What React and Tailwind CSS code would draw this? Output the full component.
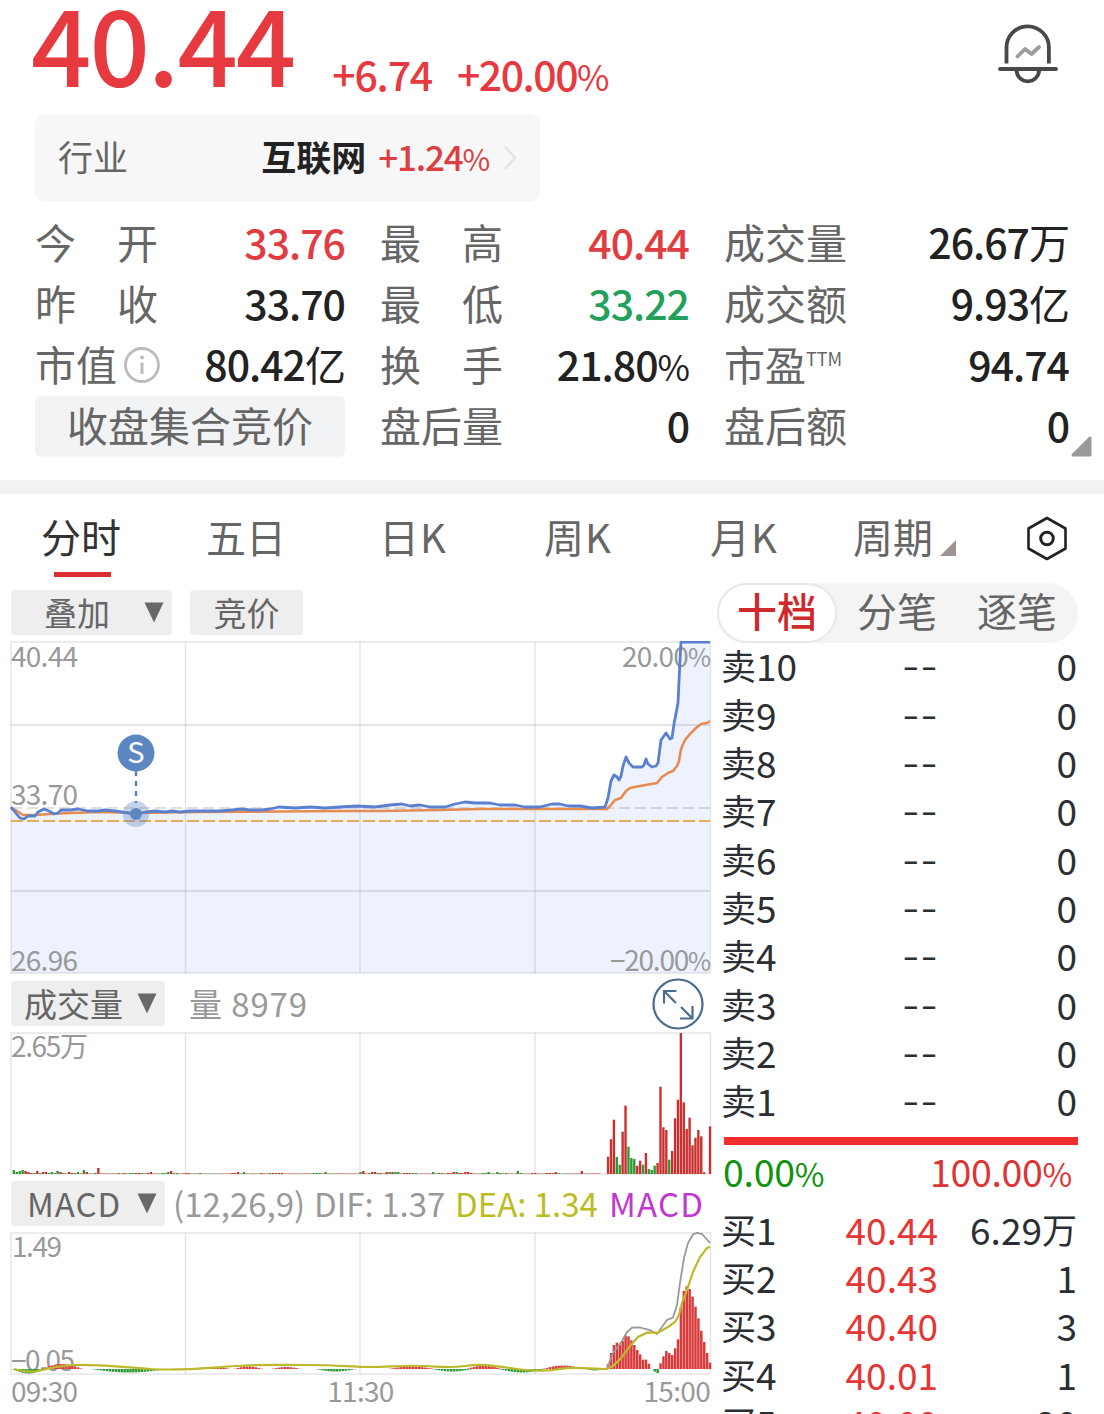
import React, { useState } from "react";
import clsx from "clsx";

const RED = "#c9302f";
const GREEN = "#2f9a35";
const STEP = 2.9125;

const stats = [
  { label: "今开", value: "33.76", color: "text-[#e03c41]" },
  { label: "最高", value: "40.44", color: "text-[#e03c41]" },
  { label: "成交量", value: "26.67", unit: "万" },
  { label: "昨收", value: "33.70" },
  { label: "最低", value: "33.22", color: "text-[#23a15c]" },
  { label: "成交额", value: "9.93", unit: "亿" },
  { label: "市值", value: "80.42", unit: "亿", info: true },
  { label: "换手", value: "21.80", pct: true },
  { label: "市盈", value: "94.74", sup: "TTM" },
  { button: "收盘集合竞价" },
  { label: "盘后量", value: "0" },
  { label: "盘后额", value: "0" },
];

const sells = [10, 9, 8, 7, 6, 5, 4, 3, 2, 1];
const buys = [
  { level: 1, price: "40.44", amount: "6.29", unit: "万" },
  { level: 2, price: "40.43", amount: "1" },
  { level: 3, price: "40.40", amount: "3" },
  { level: 4, price: "40.01", amount: "1" },
  { level: 5, price: "40.00", amount: "20" },
];

// one entry per minute, negative = falling minute
const quietVolume = [
  0, -4, -2, -3, -4, 3, 2, 1, -1, 3, -1, 2, 2, -1, -2, -1, -3, 2, -1, 0.5, 2, 1, -1, -2, 0.5, -4, 2, 0.5, -0.5, -1, 6, 0.5, 0.5, 0.5, 0.5, 0.5,
  0.5, -1, 0.5, 1, -0.5, -1, -1, 1, 1, -1, 0.5, 1, 2, 0.5, 0.5, -0.5, -1, -1, -2, 3, -1, -1, 0.5, 0.5, 1, 1, -0.5, 0.5, 0.5, -1, -0.5, 0.5, -0.5, -0.5, -0.5, -0.5,
  0.5, 0.5, 0.5, 0.5, 1, 1, 2, -0.5, -2, 0.5, -0.5, 0.5, 0.5, -0.5, 1, 0.5, 0.5, -1, 1, -1, 1, 1, 0.5, 0.5, 0.5, 0.5, 0.5, -0.5, 0.5, 0.5, 0.5, 0.5, -1, -1,
  -1, 0.5, -2, 0.5, -0.5, 0.5, 0.5, 0.5, 0.5, 0.5, 0.5, 0.5, 0.5, 0.5, -2, 3, 0.5, -1, 2, 2, -1, 1, 0.5, 2, -2, 2, -2, -2, 0.5, 1, 1, 1, -1, -1, -0.5, 0.5,
  0.5, 0.5, 0.5, -2, -0.5, 1, -1, 0.5, 1, 1, 2, -2, 1, 1, 2, 2, 1, 0.5, -0.5, 0.5, -1, -1, -2, 0.5, -0.5, -2, -1, 0.5, -1, 0.5, 0.5, -0.5, -3, -1, 0.5, -0.5,
  0.5, 1, 1, 0.5, -0.5, 0.5, 1, 1, 1, 2, -1, -0.5, -0.5, 0.5, 0.5, 0.5, 0.5, 0.5, 3, -0.5, 0.5, 0.5, 0.5, 0.5, 0.5,
];
const lateVolume = [
  17.3, 34.7, 54.3, -17, -9.3, 42.3, 68.3, -27.3, -16, -15, 8.3, 13.3, -9.3, 21, -5, -4, -8.3, 11, 87.3, 46.7, 44, -14.3,
  23, 55.7, 74.3, 141, 71.7, 45, 56.3, 28.7, 36.3, 44, 37.7, 1.7, 0, 47.7,
];
const lateMacd = [
  15, 48, 72, 79, 73, 84, 101, 98, 86, 72, 57, 44, 28, 28, 16, 0, -8, -12, 17, 38, 54, 48, 42, 62, 89, 186, 234, 248, 240,
  217, 187, 152, 115, 81, 48, 19,
];

// start minute, length and height of the small early histogram swells
const swells = [
  [1, 11, -4.5], [11, 14, 5], [28, 26, -3.5], [63, 13, 2], [77, 10, 2.5], [90, 10, 2], [105, 14, -2.5],
  [130, 16, 2.5], [145, 14, -2.5], [157, 12, 3.5], [168, 16, -3.5], [183, 14, 3.5], [198, 6, -1.5],
];

const priceLine =
  "11,807 15,812 20,818 24,819 28,816 35,816 38,812 44,809 49,811 54,814 58,813 61,810 70,810 78,809 88,811 98,811 105,810 115,811 122,812 128,813 136,814 146,812 155,811 165,812 172,811 180,812 190,811 205,811 220,811 232,810 242,809 250,810 262,810 270,809 279,807 295,808 310,807 325,808 340,807 357,806 375,807 390,805 402,804 410,806 420,805 430,807 445,807 455,804 465,802 475,803 490,803 500,805 515,805 525,807 540,807 552,804 560,804 568,806 580,806 592,808 605,807 608,798 611,781 614,775 617,777 619,780 621,776 623,766 626,757 629,763 633,767 642,767 644,765 646,759 648,764 652,767 656,766 658,763 661,740 666,733 670,739 672,738 674,724 678,703 680,660 681,642 710,642";

const avgLine =
  "11,808 17,811 23,815 35,815 50,814 70,813 100,812 136,813 200,812 280,811.5 340,811 380,811 440,810 480,809 540,809 607,809 610,806 615,800 621,798 626,791 630,788 640,786 657,783 662,777 668,773 673,771 677,766 679,761 681,749 685,740 690,734 696,728 701,724 707,723 710,721";

function DownArrow() {
  return (
    <svg width="20" height="21" viewBox="0 0 20 21">
      <path d="M0.5 0.5H19.5L10 20.5Z" fill="#686868" />
    </svg>
  );
}

function Percent() {
  return <span className="text-[0.86em] font-normal">%</span>;
}

function BellIcon() {
  return (
    <svg width="60" height="60" viewBox="0 0 60 60" fill="none" stroke="#484848" strokeWidth="3.8">
      <path d="M8.5 39.5V23.5a21.2 21.2 0 0 1 42.4 0v16" />
      <path d="M2 45h56" strokeLinecap="round" />
      <path d="M18.5 46a11.3 11.3 0 0 0 22.6 0" />
      <path d="M19.5 32.500l7.500-7.500 6.500 5 7.500-7" stroke="#9b9b9b" strokeLinecap="round" strokeLinejoin="round" />
    </svg>
  );
}

function Header() {
  return (
    <header className="flex h-[114px] items-start justify-between pr-[46px] pl-[31px] text-[#e73a40]">
      <div className="flex items-baseline font-medium">
        <span className="text-[106px] leading-[82px] tracking-[-2px]">40.44</span>
        <span className="relative top-[4px] ml-[38px] text-[41px] leading-[60px] tracking-[-1.2px]">+6.74</span>
        <span className="relative top-[4px] ml-[25px] text-[41px] leading-[60px] tracking-[-1.5px]">
          +20.00
          <Percent />
        </span>
      </div>
      <div className="mt-[24px]">
        <BellIcon />
      </div>
    </header>
  );
}

function Industry() {
  return (
    <div className="ml-[35px] flex h-[88px] w-[505px] items-center rounded-[10px] bg-[#f7f7f7] pb-[4px] pl-[23px] text-[35px]">
      <span className="text-[#666]">行业</span>
      <span className="ml-auto font-bold text-[#222]">互联网</span>
      <span className="ml-[12px] text-[35px] font-medium tracking-[-1.2px] text-[#db3f43]">
        +1.24
        <Percent />
      </span>
      <svg className="mt-[4px] mr-[23px] ml-[14px]" width="14" height="24" viewBox="0 0 14 24" fill="none" stroke="#e3e3e3" strokeWidth="2.500">
        <path d="M2 1l10 11L2 23" />
      </svg>
    </div>
  );
}

function Stats() {
  return (
    <div className="relative mt-[9px] grid grid-cols-[310px_309px_345px] gap-x-[35px] pl-[35px] text-[41px] leading-[61px]">
      {stats.map((item, i) =>
        item.button ? (
          <button key={i} className="mt-[2px] h-[61px] rounded-md bg-[#f2f3f5] pb-[5px] leading-[50px] text-[#666]">
            {item.button}
          </button>
        ) : (
          <div key={i} className="flex h-[61px] justify-between">
            <div className="flex text-[#666]">
              <div className={clsx("flex", item.label.length === 2 && !item.info && !item.sup && "w-[123px] justify-between")}>
                {item.info || item.sup ? item.label : [...item.label].map((c) => <span key={c}>{c}</span>)}
              </div>
              {item.info && (
                <svg className="mt-[13px] ml-[6px]" width="38" height="38" viewBox="0 0 38 38" fill="none" stroke="#bcbcbc">
                  <circle cx="19" cy="19" r="16.500" strokeWidth="2.800" />
                  <path d="M19 16.500v11.500" strokeWidth="3" />
                  <circle cx="19" cy="11.500" r="2" fill="#bcbcbc" stroke="none" />
                </svg>
              )}
              {item.sup && <span className="-mt-[5px] text-[18px]">{item.sup}</span>}
            </div>
            <span className={clsx("font-medium tracking-[-1px]", item.color || "text-[#222]")}>
              {item.value}
              {item.pct && <Percent />}
              {item.unit && <span className="font-normal">{item.unit}</span>}
            </span>
          </div>
        )
      )}
      <svg className="absolute top-[225px] left-[1071px]" width="21" height="21" viewBox="0 0 21 21">
        <path d="M2 19L19 2V19Z" fill="#999" stroke="#999" strokeWidth="3" strokeLinejoin="round" />
      </svg>
    </div>
  );
}

function Tabs() {
  return (
    <nav className="flex h-[89px] pl-[41px] text-[40px] leading-[85px] text-[#666]">
      <div className="flex w-[165px] flex-col text-[#333]">
        <span className="h-[78px]">分时</span>
        <span className="ml-[13px] h-[5px] w-[57px] bg-[#dc2e30]" />
      </div>
      <span className="w-[173px]">五日</span>
      <span className="w-[165px] tracking-[1px]">日K</span>
      <span className="w-[166px] tracking-[1px]">周K</span>
      <span className="w-[143px] tracking-[1px]">月K</span>
      <span>周期</span>
      <svg className="mt-[46px] ml-[7px]" width="17" height="17" viewBox="0 0 17 17">
        <path d="M0 16L16 0V16Z" fill="#a09494" />
      </svg>
      <svg className="mt-[22px] ml-[69px]" width="42" height="45" viewBox="0 0 42 45" fill="none" stroke="#222">
        <path d="M21 2L39.500 12.500V32.500L21 43L2.500 32.500V12.500Z" strokeWidth="2.600" strokeLinejoin="round" />
        <circle cx="21" cy="22.500" r="6.300" strokeWidth="3" />
      </svg>
    </nav>
  );
}

function Grid({ top, bottom }) {
  return (
    <g stroke="#000" strokeOpacity="0.1" strokeWidth="1.500" fill="none">
      <rect x="11" y={top} width="699.500" height={bottom - top} />
      <path d={`M185.500 ${top}V${bottom}M360 ${top}V${bottom}M535 ${top}V${bottom}`} />
    </g>
  );
}

function PriceChart() {
  return (
    <svg width="704" height="334" viewBox="10 641 704 334" fontSize="28" fill="#999">
      <polygon points={`11,973 ${priceLine} 710,973`} fill="#edf2fe" />
      <Grid top={642} bottom={973} />
      <path d="M11 725H710M11 891H710" stroke="#000" strokeOpacity="0.1" strokeWidth="1.800" />
      <path d="M11 808H710" stroke="#000" strokeOpacity="0.12" strokeWidth="1.800" strokeDasharray="11 5" />
      <text x="11" y="667" textLength="67">40.44</text>
      <text x="11" y="805" textLength="67">33.70</text>
      <text x="11" y="971" textLength="67">26.96</text>
      <text x="622" y="667" textLength="89">20.00<tspan fontSize="25">%</tspan></text>
      <text x="610" y="971" textLength="101">−20.00<tspan fontSize="25">%</tspan></text>
      <path d="M11 821H710" stroke="#e3ad5b" strokeWidth="2" strokeDasharray="12 4" />
      <polyline points={avgLine} fill="none" stroke="#e68c50" strokeWidth="2.600" strokeLinejoin="round" />
      <polyline points={priceLine} fill="none" stroke="#5b80d0" strokeWidth="2.800" strokeLinejoin="round" />
      <path d="M136 771V803" stroke="#5c80ae" strokeWidth="2.400" strokeDasharray="5 5" />
      <circle cx="136" cy="814" r="13" fill="#5d87c0" fillOpacity="0.35" />
      <circle cx="136" cy="814" r="6" fill="#5d87c0" />
      <circle cx="136" cy="753" r="18.500" fill="#5d87c0" />
      <text x="136" y="763" textAnchor="middle" fontSize="29" fill="#fff">S</text>
    </svg>
  );
}

function VolumeChart() {
  const volume = [...quietVolume.slice(0, 205).map((v, i) => [i, v]), ...lateVolume.map((v, i) => [205 + i, v])];
  return (
    <svg width="704" height="143" viewBox="10 1032 704 143" fontSize="28" fill="#999">
      <Grid top={1033} bottom={1174} />
      <text x="11" y="1057" textLength="77">2.65万</text>
      {volume.map(([i, v]) => (
        <rect
          key={i}
          x={11 + i * STEP - 1.2}
          y={1174 - Math.abs(v)}
          width="2.400"
          height={Math.abs(v)}
          fill={v < 0 ? GREEN : RED}
        />
      ))}
    </svg>
  );
}

function MacdChart() {
  const bars = [];
  swells.forEach(([start, len, h]) => {
    for (let k = 0; k < len; k++) {
      bars.push({ i: start + k, h: h * Math.sin(((k + 0.5) / len) * Math.PI) });
    }
  });
  lateMacd.forEach((h, k) => bars.push({ i: 205 + k, h: h / 3 }));
  return (
    <svg width="704" height="143" viewBox="10 1232 704 143" fontSize="28" fill="#999">
      <Grid top={1233} bottom={1374} />
      <text x="12" y="1257" textLength="50">1.49</text>
      <text x="11" y="1371" textLength="64">−0.05</text>
      {bars.map((b, k) => (
        <rect
          key={k}
          x={11 + b.i * STEP - 1.2}
          y={b.h > 0 ? 1369 - b.h : 1369}
          width="2.500"
          height={Math.abs(b.h)}
          fill={b.h < 0 ? GREEN : "#d93a39"}
        />
      ))}
      <path
        d="M607 1368L613 1353L622 1341L627 1332L632 1327.700L640 1327.500L645 1329L650 1330L657 1334L662 1327L667 1320L673 1317.500L677 1305L680 1283L684 1258L688 1243L693 1234.500L697 1232.800L702 1234L710 1243"
        fill="none"
        stroke="#999"
        strokeWidth="1.800"
      />
      <path
        d="M14 1369C22 1371 30 1373 38 1371S55 1366 75 1365S120 1367 150 1369S205 1368 235 1366S280 1365 310 1365S350 1367 370 1367S405 1365 425 1366S450 1368 465 1366S490 1365 510 1368S545 1372 560 1369S590 1369 607 1369L613 1366L622 1357L630 1346L638 1337L647 1332.700L658 1332.700L668 1327L675 1322L679 1315L682 1303L687 1290L693 1272L700 1257L707 1248L710 1247"
        fill="none"
        stroke="#bcb92c"
        strokeWidth="2.200"
      />
    </svg>
  );
}

function ChartPanel() {
  const chip = "flex h-[45px] items-center rounded bg-[#eee] text-[33px] leading-[40px] text-[#666]";
  return (
    <section className="flex w-[704px] flex-col">
      <div className="mt-[7px] ml-px flex">
        <button className={clsx(chip, "w-[161px] justify-between pr-[8px] pl-[33px]")}>
          <span className="-mt-[2px]">叠加</span>
          <DownArrow />
        </button>
        <button className={clsx(chip, "ml-[18px] w-[113px] justify-center")}>
          <span className="-mt-[2px]">竞价</span>
        </button>
      </div>
      <div className="mt-[6px]">
        <PriceChart />
      </div>
      <div className="mt-[6px] ml-px flex h-[45px] items-center">
        <button className={clsx(chip, "w-[154px] justify-between pr-[8px] pl-[13px]")}>
          <span className="-mt-[2px]">成交量</span>
          <DownArrow />
        </button>
        <span className="-mt-[2px] ml-[24px] text-[33px] leading-[40px] tracking-[0.9px] text-[#999]">量 8979</span>
        <svg className="mr-[10px] ml-auto" width="52" height="52" viewBox="0 0 52 52" fill="none" stroke="#496c90" strokeWidth="2.200">
          <circle cx="26" cy="26" r="24.500" />
          <path d="M24 25L12.500 13.500M12 25.500V13H24.500M29 29L40.500 40.500M28 40.500H40.500V28" />
        </svg>
      </div>
      <div className="mt-[6px]">
        <VolumeChart />
      </div>
      <div className="mt-[6px] ml-px flex h-[45px] items-center text-[33px] leading-[40px] whitespace-nowrap text-[#999]">
        <button className={clsx(chip, "w-[154px] shrink-0 justify-between pr-[8px] pl-[16px]")}>
          <span className="-mt-[2px] tracking-[1px]">MACD</span>
          <DownArrow />
        </button>
        <span className="-mt-[2px] ml-[8px] w-[134px]">(12,26,9)</span>
        <span className="-mt-[2px] ml-[7px] w-[129px]">DIF: 1.37</span>
        <span className="-mt-[2px] ml-[12px] w-[144px] text-[#bcbc22]">DEA: 1.34</span>
        <span className="-mt-[2px] ml-[10px] tracking-[1.2px] text-[#c436d0]">MACD</span>
      </div>
      <div className="mt-[6px]">
        <MacdChart />
      </div>
      <div className="-mt-[2px] ml-px flex w-[699px] justify-between text-[28px] leading-[34px] tracking-[-0.7px] text-[#999]">
        <span>09:30</span>
        <span>11:30</span>
        <span>15:00</span>
      </div>
    </section>
  );
}

function OrderRow({ side, level, price, amount, unit, up }) {
  return (
    <div className="flex h-[48.35px] items-center pr-px pl-[7px] text-[37px] leading-[48px] text-[#2b2f33]">
      <span className="flex w-[100px] items-center">
        <span className="text-[35px]">{side}</span>
        {level}
      </span>
      <span className={clsx("w-[117px] text-right", up && "text-[#e53535]")}>{price}</span>
      <span className="ml-auto flex items-center">
        {amount}
        {unit && <span className="text-[35px]">{unit}</span>}
      </span>
    </div>
  );
}

function Dashes() {
  return <span className="font-['Inter'] text-[40px] leading-[40px] font-light">--</span>;
}

function OrderBook() {
  const [tab, setTab] = useState("十档");
  return (
    <section className="flex w-[364px] flex-col">
      <div className="ml-[3px] flex h-[60px] w-[361px] rounded-full bg-[#f4f4f4] text-[40px] leading-[50px] text-[#666]">
        {["十档", "分笔", "逐笔"].map((name) => (
          <button
            key={name}
            onClick={() => setTab(name)}
            className={clsx(
              "w-[120px] rounded-full border-2 pb-[6px]",
              tab === name ? "border-[#e8e8e8] bg-white font-medium text-[#cf2a2b]" : "border-transparent"
            )}
          >
            {name}
          </button>
        ))}
      </div>
      <div className="-mt-[2px]">
        {sells.map((level) => (
          <OrderRow key={level} side="卖" level={level} price={<Dashes />} amount="0" />
        ))}
      </div>
      <div className="mt-[13px] ml-[10px] h-[8px] bg-[#f72d2d]" />
      <div className="flex justify-between pr-[6px] pl-[9px] text-[37.500px] leading-[52px] tracking-[-0.3px]">
        <span className="text-[#12930f]">
          0.00
          <Percent />
        </span>
        <span className="text-[#dc3535]">
          100.00
          <Percent />
        </span>
      </div>
      <div className="mt-[5px]">
        {buys.map((b) => (
          <OrderRow key={b.level} side="买" {...b} up />
        ))}
      </div>
    </section>
  );
}

const App = () => {
  return (
    <main className="h-[1414px] w-[1104px] overflow-hidden bg-white font-['Noto_Sans_CJK_SC','Noto_Sans',sans-serif]">
      <Header />
      <Industry />
      <Stats />
      <div className="mt-[23px] h-[14px] bg-[#f2f3f5]" />
      <Tabs />
      <div className="flex pl-[10px]">
        <ChartPanel />
        <OrderBook />
      </div>
    </main>
  );
};

export default App;
